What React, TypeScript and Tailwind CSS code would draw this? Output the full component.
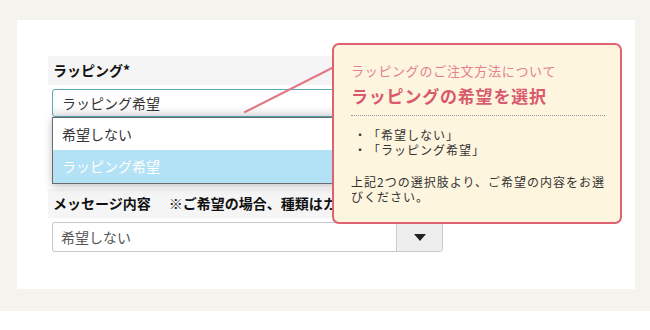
import React from 'react';

const jp = { fontFamily: '"Noto Sans CJK JP", "Noto Sans", sans-serif' };

const App: React.FC = () => {
  return (
    <div className="w-[650px] h-[330px] bg-white" style={jp}>
      <div className="h-[311px] bg-[#f4f3ed] pt-[20px] pl-[17px] pr-[15px]">
        <div className="relative h-[269px] bg-white pl-[31px] pt-[36px]">
          {/* wrapping */}
          <div className="w-[560px] h-[29px] bg-[#f5f5f5] pl-[5px] flex items-center text-[14px] font-bold text-[#111]">
            ラッピング*
          </div>
          <div className="relative ml-[4px] mt-[4px] w-[391px] h-[28px] rounded-[3px] border border-[#5aa8b8] bg-gradient-to-b from-white from-60% to-[#e9e9e9] pl-[9px] flex items-center text-[14px] text-[#333]">
            ラッピング希望
            <ul className="absolute left-[-1px] top-[27px] w-[391px] border border-[#6b6b6b] bg-white shadow-[0_2px_8px_rgba(0,0,0,0.25)] z-10">
              <li className="h-[32px] pl-[9px] flex items-center text-[#333]">希望しない</li>
              <li className="h-[33px] pl-[9px] flex items-center bg-[#b3e1f6] text-white">ラッピング希望</li>
            </ul>
          </div>

          {/* message */}
          <div className="mt-[72px] w-[560px] h-[29px] bg-[#f5f5f5] pl-[5px] flex items-center text-[14px] font-bold text-[#111] whitespace-nowrap overflow-hidden">
            メッセージ内容<span className="ml-[18px]">※ご希望の場合、種類はカードからお選びください</span>
          </div>
          <div className="ml-[4px] mt-[4px] w-[391px] h-[30px] rounded-[3px] border border-[#c8c8c8] flex overflow-hidden">
            <div className="flex-1 pl-[8px] flex items-center text-[14px] text-[#555]">希望しない</div>
            <div className="w-[46px] bg-[#eeeeee] border-l border-[#cccccc] flex items-center justify-center">
              <svg width="12" height="7" viewBox="0 0 12 7">
                <path d="M0 0 L12 0 L6 7 Z" fill="#222" />
              </svg>
            </div>
          </div>

          {/* connector */}
          <svg className="absolute left-0 top-0 z-20" width="330" height="120">
            <line x1="228" y1="92" x2="317" y2="47" stroke="#e27a8c" strokeWidth="2.2" strokeLinecap="round" />
          </svg>

          {/* tooltip */}
          <div className="absolute left-[315px] top-[23px] w-[290px] h-[181px] z-30 rounded-[7px] border-2 border-[#df6273] bg-[#fef5df] pl-[17px] pr-[15px] pt-[17px]">
            <div className="text-[13px] leading-[18px] tracking-[0.7px] text-[#e47f93]">ラッピングのご注文方法について</div>
            <div className="mt-[4px] text-[17px] leading-[24px] tracking-[0.8px] font-bold text-[#d95a6d]">ラッピングの希望を選択</div>
            <div className="mt-[7px] border-t border-dotted border-[#999]" />
            <ul className="mt-[11px] text-[12px] leading-[15px] tracking-[1px] text-[#333]">
              <li className="flex"><span className="w-[17px] pl-[3px]">・</span>「希望しない」</li>
              <li className="flex"><span className="w-[17px] pl-[3px]">・</span>「ラッピング希望」</li>
            </ul>
            <p className="mt-[17px] text-[12px] leading-[15px] tracking-[1px] text-[#333]">
              上記2つの選択肢より、ご希望の内容をお選びください。
            </p>
          </div>
        </div>
      </div>
    </div>
  );
};

export default App;
